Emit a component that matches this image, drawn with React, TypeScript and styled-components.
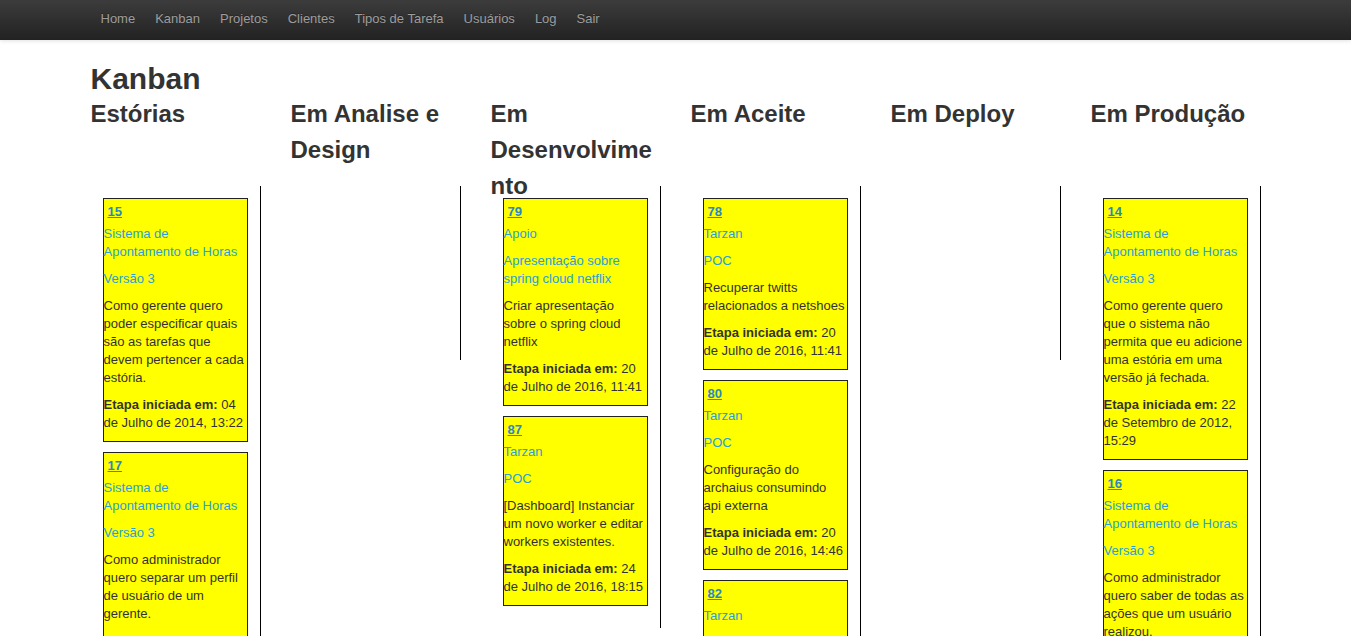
import React from "react";
import styled, { createGlobalStyle } from "styled-components";

const GlobalStyle = createGlobalStyle`
  html, body { margin: 0; padding: 0; background: #fff; }
  body {
    font-family: "Liberation Sans", Helvetica, Arial, sans-serif;
    font-size: 13px;
    line-height: 18px;
    color: #333;
  }
  * { box-sizing: border-box; }
`;

const NavBar = styled.nav`
  height: 40px;
  background-image: linear-gradient(to bottom, #3c3c3c 0%, #222 100%);
  box-shadow: 0 1px 4px rgba(0, 0, 0, 0.12);
`;

const NavInner = styled.ul`
  width: 1170px;
  margin: 0 auto;
  padding: 9px 0 0;
  list-style: none;
  display: flex;
`;

const NavLink = styled.a`
  display: block;
  padding: 0 10px;
  line-height: 20px;
  font-size: 13px;
  color: #9d9d9d;
  text-decoration: none;
  text-shadow: 0 -1px 0 rgba(0, 0, 0, 0.25);
`;

const Container = styled.main`
  width: 1170px;
  margin: 0 auto;
`;

const PageTitle = styled.h1`
  margin: 22px 0 0;
  font-size: 30px;
  line-height: 33px;
  font-weight: bold;
  color: #333;
`;

const Columns = styled.div<{ $height?: number }>`
  display: grid;
  grid-template-columns: repeat(6, 170px);
  column-gap: 30px;
  align-items: start;
  ${(p) => (p.$height ? `height: ${p.$height}px; padding-top: 1px;` : "")}
`;

const ColumnTitle = styled.h3`
  margin: 0;
  font-size: 24px;
  line-height: 36px;
  font-weight: bold;
  color: #333;
  overflow-wrap: break-word;
  word-wrap: break-word;
`;

const Lane = styled.div`
  min-height: 174px;
  padding: 12px;
  border-right: 1px solid #000;
`;

const Card = styled.div`
  background: #ffff00;
  border: 1px solid #222;
  padding: 4px 0 0;
  margin-bottom: 10px;
  font-size: 13px;
  line-height: 18px;
  color: #333;
`;

const CardId = styled.a`
  display: block;
  padding-left: 4px;
  margin-bottom: 4px;
  font-weight: bold;
  color: #2a88c0;
  text-decoration: underline;
`;

const CardLine = styled.p`
  margin: 0 0 9px;
`;

const CardLink = styled.a`
  color: #2a9fd6;
  text-decoration: none;
`;

type Story = {
  id: number;
  project: string;
  version: string;
  text: string;
  date: string;
};

const lanes: { title: string; cards: Story[] }[] = [
  {
    title: "Estórias",
    cards: [
      {
        id: 15,
        project: "Sistema de Apontamento de Horas",
        version: "Versão 3",
        text: "Como gerente quero poder especificar quais são as tarefas que devem pertencer a cada estória.",
        date: "04 de Julho de 2014, 13:22",
      },
      {
        id: 17,
        project: "Sistema de Apontamento de Horas",
        version: "Versão 3",
        text: "Como administrador quero separar um perfil de usuário de um gerente.",
        date: "04 de Julho de 2014, 13:25",
      },
    ],
  },
  { title: "Em Analise e Design", cards: [] },
  {
    title: "Em Desenvolvimento",
    cards: [
      {
        id: 79,
        project: "Apoio",
        version: "Apresentação sobre spring cloud netflix",
        text: "Criar apresentação sobre o spring cloud netflix",
        date: "20 de Julho de 2016, 11:41",
      },
      {
        id: 87,
        project: "Tarzan",
        version: "POC",
        text: "[Dashboard] Instanciar um novo worker e editar workers existentes.",
        date: "24 de Julho de 2016, 18:15",
      },
    ],
  },
  {
    title: "Em Aceite",
    cards: [
      {
        id: 78,
        project: "Tarzan",
        version: "POC",
        text: "Recuperar twitts relacionados a netshoes",
        date: "20 de Julho de 2016, 11:41",
      },
      {
        id: 80,
        project: "Tarzan",
        version: "POC",
        text: "Configuração do archaius consumindo api externa",
        date: "20 de Julho de 2016, 14:46",
      },
      {
        id: 82,
        project: "Tarzan",
        version: "POC",
        text: "Integração do dashboard com o serviço de workers",
        date: "21 de Julho de 2016, 09:12",
      },
    ],
  },
  { title: "Em Deploy", cards: [] },
  {
    title: "Em Produção",
    cards: [
      {
        id: 14,
        project: "Sistema de Apontamento de Horas",
        version: "Versão 3",
        text: "Como gerente quero que o sistema não permita que eu adicione uma estória em uma versão já fechada.",
        date: "22 de Setembro de 2012, 15:29",
      },
      {
        id: 16,
        project: "Sistema de Apontamento de Horas",
        version: "Versão 3",
        text: "Como administrador quero saber de todas as ações que um usuário realizou.",
        date: "22 de Setembro de 2012, 15:31",
      },
    ],
  },
];

const navItems = ["Home", "Kanban", "Projetos", "Clientes", "Tipos de Tarefa", "Usuários", "Log", "Sair"];

function StoryCard({ s }: { s: Story }) {
  return (
    <Card>
      <CardId href="#">{s.id}</CardId>
      <CardLine>
        <CardLink href="#">{s.project}</CardLink>
      </CardLine>
      <CardLine>
        <CardLink href="#">{s.version}</CardLink>
      </CardLine>
      <CardLine>{s.text}</CardLine>
      <CardLine>
        <b>Etapa iniciada em:</b> {s.date}
      </CardLine>
    </Card>
  );
}

export default function App() {
  return (
    <>
      <GlobalStyle />
      <NavBar>
        <NavInner>
          {navItems.map((n) => (
            <li key={n}>
              <NavLink href="#">{n}</NavLink>
            </li>
          ))}
        </NavInner>
      </NavBar>
      <Container>
        <PageTitle>Kanban</PageTitle>
        <Columns $height={91}>
          {lanes.map((l) => (
            <ColumnTitle key={l.title}>{l.title}</ColumnTitle>
          ))}
        </Columns>
        <Columns>
          {lanes.map((l) => (
            <Lane key={l.title}>
              {l.cards.map((c) => (
                <StoryCard key={c.id} s={c} />
              ))}
            </Lane>
          ))}
        </Columns>
      </Container>
    </>
  );
}
